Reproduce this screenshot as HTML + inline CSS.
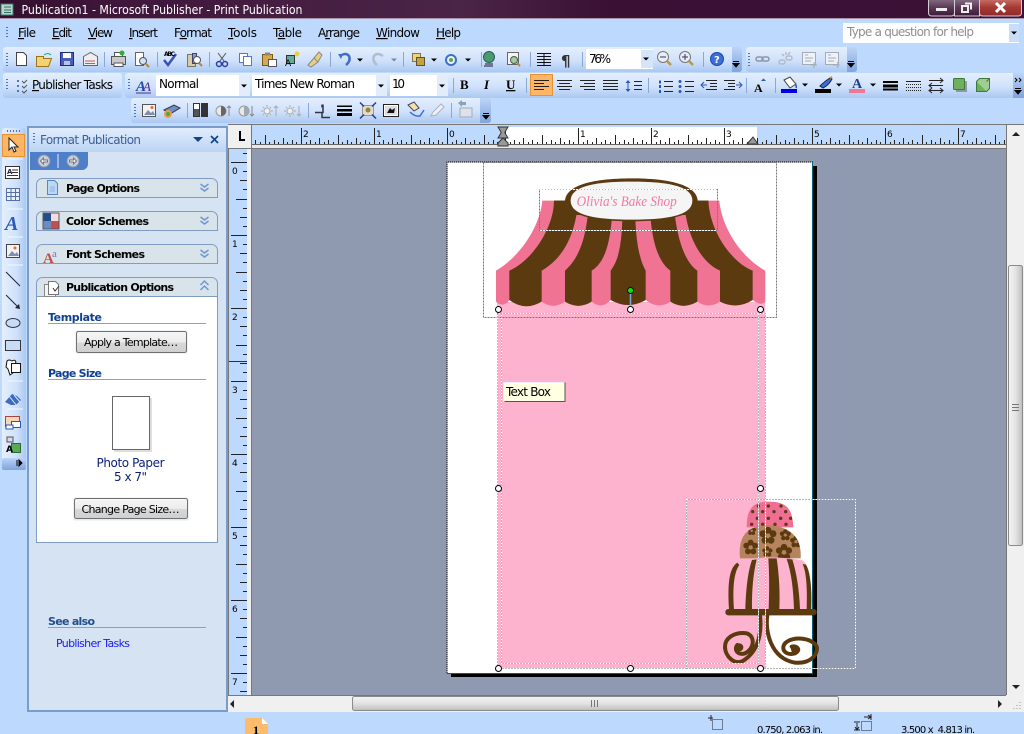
<!DOCTYPE html>
<html><head><meta charset="utf-8"><title>Publisher</title>
<style>html,body{margin:0;padding:0;background:#bdd9fd;overflow:hidden}svg{display:block}text{font-family:"DejaVu Sans","Liberation Sans",sans-serif;font-size:11px;fill:#000}.m{font-size:12px}.b{font-weight:bold}.h{fill:#0f3f92;font-weight:bold}</style></head><body>
<svg xmlns="http://www.w3.org/2000/svg" width="1024" height="734" viewBox="0 0 1024 734">
<defs>
<linearGradient id="title" x1="0" x2="1" y1="0" y2="0"><stop offset="0" stop-color="#33102f"/><stop offset=".12" stop-color="#40173c"/><stop offset=".45" stop-color="#4a2548"/><stop offset=".6" stop-color="#3a1035"/><stop offset="1" stop-color="#3c1137"/></linearGradient>
<linearGradient id="tb" x1="0" x2="0" y1="0" y2="1"><stop offset="0" stop-color="#e4effe"/><stop offset=".55" stop-color="#cfe1fb"/><stop offset="1" stop-color="#abc8f2"/></linearGradient>
<linearGradient id="ch" x1="0" x2="0" y1="0" y2="1"><stop offset="0" stop-color="#bcd4f6"/><stop offset="1" stop-color="#80a4de"/></linearGradient>
<linearGradient id="vt" x1="0" x2="1" y1="0" y2="0"><stop offset="0" stop-color="#e4effe"/><stop offset=".6" stop-color="#cfe1fb"/><stop offset="1" stop-color="#abc8f2"/></linearGradient>
<linearGradient id="btn" x1="0" x2="0" y1="0" y2="1"><stop offset="0" stop-color="#f6f6f6"/><stop offset=".5" stop-color="#ececec"/><stop offset=".55" stop-color="#d8d8d8"/><stop offset="1" stop-color="#cfcfcf"/></linearGradient>
<linearGradient id="sv" x1="0" x2="1" y1="0" y2="0"><stop offset="0" stop-color="#f4f4f4"/><stop offset=".5" stop-color="#e4e4e4"/><stop offset="1" stop-color="#bdbdbd"/></linearGradient>
<linearGradient id="sh" x1="0" x2="0" y1="0" y2="1"><stop offset="0" stop-color="#f4f4f4"/><stop offset=".5" stop-color="#e2e2e2"/><stop offset="1" stop-color="#bdbdbd"/></linearGradient>
<linearGradient id="gl" x1="0" x2="0" y1="0" y2="1"><stop offset="0" stop-color="#8a7488"/><stop offset=".5" stop-color="#5c3c58"/><stop offset="1" stop-color="#3c1b38"/></linearGradient>
<linearGradient id="red" x1="0" x2="0" y1="0" y2="1"><stop offset="0" stop-color="#c97a72"/><stop offset=".5" stop-color="#a83a34"/><stop offset="1" stop-color="#8e2a2a"/></linearGradient>
<linearGradient id="ph" x1="0" x2="0" y1="0" y2="1"><stop offset="0" stop-color="#e1edfd"/><stop offset="1" stop-color="#bcd4f4"/></linearGradient>
<pattern id="rh" patternUnits="userSpaceOnUse" x="447" y="127" width="73" height="18"><path d="M.5 1V18M5.5 15V18M9.5 13V18M14.5 15V18M18.5 11V18M23.5 15V18M27.5 13V18M32.5 15V18M37.5 8V18M41.5 15V18M46.5 13V18M50.5 15V18M55.5 11V18M59.5 15V18M64.5 13V18M68.5 15V18" stroke="#222" fill="none"/></pattern>
<pattern id="rw" patternUnits="userSpaceOnUse" x="505" y="127" width="73" height="18"><path d="M.5 1V18M5.5 15V18M9.5 13V18M14.5 15V18M18.5 11V18M23.5 15V18M27.5 13V18M32.5 15V18M37.5 8V18M41.5 15V18M46.5 13V18M50.5 15V18M55.5 11V18M59.5 15V18M64.5 13V18M68.5 15V18" stroke="#222" fill="none"/></pattern>
<pattern id="rv" patternUnits="userSpaceOnUse" x="229" y="162" width="18" height="73"><path d="M2 .5H18M14 9.5H18M11 18.5H18M14 27.5H18M7 37.5H18M14 46.5H18M11 55.5H18M14 64.5H18" stroke="#222" fill="none"/></pattern>
<clipPath id="t1"><path d="M200 112C200 60 215 35 265 35C320 35 337 55 340 112Z"/></clipPath>
<clipPath id="t2"><path d="M180 205C175 150 190 108 262 106C340 108 365 150 362 205Z"/></clipPath>
<g id="fl"><circle cx="0" cy="-14" r="9"/><circle cx="13" cy="-5" r="9"/><circle cx="8" cy="12" r="9"/><circle cx="-8" cy="12" r="9"/><circle cx="-13" cy="-5" r="9"/><circle cx="0" cy="0" r="6" fill="#b5845e"/></g>
<g id="dd"><path d="M-3 -1.5H3L0 1.5Z" fill="#000"/></g>
<g id="chev"><path d="M-3 -3.5H3M-3 -1.5H3L0 2Z" stroke="#000" stroke-width="1" fill="#000"/></g>
<g id="pc"><path d="M-4 -2L0 1L4 -2M-4 2L0 5L4 2" stroke="#6f96d6" stroke-width="1.5" fill="none"/></g>
</defs>

<rect width="1024" height="734" fill="#bdd9fd"/>
<!-- title bar -->
<rect width="1024" height="19" fill="url(#title)"/><rect y="18" width="1024" height="1" fill="#a893a8"/>
<rect x="1" y="4" width="12" height="11" fill="#b9d8c8" stroke="#3d7a72"/><path d="M4 7H11M4 10H11M4 12.500H11" stroke="#2e6c66"/>
<text x="21.500" y="14" style="font-size:12px;fill:#fff" textLength="281" lengthAdjust="spacingAndGlyphs">Publication1 - Microsoft Publisher - Print Publication</text>
<rect x="928.500" y="-2" width="26" height="18" rx="3" fill="url(#gl)" stroke="#d8ccd8"/><rect x="954.500" y="-2" width="25" height="18" fill="url(#gl)" stroke="#d8ccd8"/><rect x="979.500" y="-2" width="42" height="18" rx="3" fill="url(#red)" stroke="#d8ccd8"/>
<rect x="936" y="8" width="11" height="3" fill="#eee"/><path d="M962 6h6v6h-6zM965 3.500h6v6" fill="none" stroke="#eee" stroke-width="2"/><path d="M996 3L1005 12M1005 3L996 12" stroke="#fff" stroke-width="3"/>

<!-- menu -->
<path d="M7 27v1M7 30v1M7 33v1M7 36v1" stroke="#4a75c0" stroke-width="2"/>
<g class="m">
<text class="m" x="18" y="37" textLength="18"><tspan text-decoration="underline">F</tspan>ile</text>
<text class="m" x="52" y="37" textLength="20"><tspan text-decoration="underline">E</tspan>dit</text>
<text class="m" x="88" y="37" textLength="25"><tspan text-decoration="underline">V</tspan>iew</text>
<text class="m" x="129" y="37" textLength="29"><tspan text-decoration="underline">I</tspan>nsert</text>
<text class="m" x="174" y="37" textLength="38">F<tspan text-decoration="underline">o</tspan>rmat</text>
<text class="m" x="228" y="37" textLength="29"><tspan text-decoration="underline">T</tspan>ools</text>
<text class="m" x="273" y="37" textLength="29">T<tspan text-decoration="underline">a</tspan>ble</text>
<text class="m" x="318" y="37" textLength="42">A<tspan text-decoration="underline">r</tspan>range</text>
<text class="m" x="376" y="37" textLength="44"><tspan text-decoration="underline">W</tspan>indow</text>
<text class="m" x="436" y="37" textLength="25"><tspan text-decoration="underline">H</tspan>elp</text>
</g>
<rect x="843" y="23" width="176" height="20" fill="#fff"/><rect x="1009" y="24" width="10" height="18" fill="#c9ddf8"/><use href="#dd" x="1014" y="33"/>
<text x="847" y="36" style="font-size:12px;fill:#8e8e8e" textLength="127">Type a question for help</text>

<!-- toolbars -->
<rect x="3" y="47" width="739" height="25" rx="3" fill="url(#tb)"/>
<path d="M732 47h7a3 3 0 0 1 3 3v19a3 3 0 0 1-3 3h-7z" fill="url(#ch)"/>
<rect x="746" y="47" width="111" height="25" rx="3" fill="url(#tb)"/>
<path d="M847 47h7a3 3 0 0 1 3 3v19a3 3 0 0 1-3 3h-7z" fill="url(#ch)"/>
<rect x="3" y="73" width="119" height="25" rx="3" fill="url(#tb)"/>
<rect x="125" y="73" width="899" height="25" rx="3" fill="url(#tb)"/>
<path d="M1013 73h11v25h-11z" fill="url(#ch)"/>
<rect x="131" y="98" width="360" height="25" rx="3" fill="url(#tb)"/>
<path d="M480 98h8a3 3 0 0 1 3 3v19a3 3 0 0 1-3 3h-8z" fill="url(#ch)"/>
<path d="M7 53v1M7 56v1M7 59v1M7 62v1M7 65v1M749 53v1M749 56v1M749 59v1M749 62v1M749 65v1M7 79v1M7 82v1M7 85v1M7 88v1M129 79v1M129 82v1M129 85v1M129 88v1M135 104v1M135 107v1M135 110v1M135 113v1M135 116v1" stroke="#4a75c0" stroke-width="2"/>
<use href="#chev" x="736" y="65"/><use href="#chev" x="851" y="65"/><use href="#chev" x="1018" y="92"/><use href="#chev" x="486" y="117"/>
<path d="M1015 78l2 2-2 2M1019 78l2 2-2 2" stroke="#000" fill="none"/>
<!-- separators -->
<path d="M104.500 52v15M157.500 52v15M209.500 52v15M330.500 52v15M403.500 52v15M481.500 52v15M530.500 52v15M582.500 52v15M703.500 52v15M453.500 78v15M526.500 78v15M648.500 78v15M746.500 78v15M775.500 78v15M187.500 103v15M308.500 103v15M451.500 103v15" stroke="#8aa8d4"/>

<!-- toolbar1 icons -->
<g stroke-width="1">
<path d="M16.500 52.500h7l3 3v10h-10z" fill="#fff" stroke="#444"/>
<path d="M36.500 56.500h7v2h8l-3 8h-12z" fill="#f4d274" stroke="#9c7418"/><path d="M44 55q4-3 7 0" stroke="#2a7" fill="none"/>
<rect x="60.500" y="52.500" width="13" height="13" fill="#4c5fb8" stroke="#1c2c80"/><rect x="63" y="53" width="8" height="5" fill="#fff"/><rect x="64" y="61" width="6" height="4" fill="#b7c2ea"/>
<path d="M83.500 56.500l7-4 7 4v9h-14z" fill="#eee" stroke="#666"/><path d="M85 61h10M85 63.500h10" stroke="#c55"/>
<rect x="111.500" y="56.500" width="14" height="8" fill="#c9c9c9" stroke="#555"/><rect x="114.500" y="52.500" width="8" height="4" fill="#fff" stroke="#555"/><rect x="114" y="63" width="9" height="3.500" fill="#fff" stroke="#555"/><circle cx="122" cy="53" r="2.500" fill="#3a3"/>
<path d="M135.500 52.500h8v13h-8z" fill="#fff" stroke="#666"/><circle cx="143" cy="61" r="3.500" fill="#cfe2f7" stroke="#555"/><path d="M146 64l3 3" stroke="#b8892c" stroke-width="2"/>
<path d="M164 60l4 5 8-11" stroke="#3a4fb8" stroke-width="2.500" fill="none"/><text x="164" y="56" style="font-size:6px;font-weight:bold" textLength="11">ABC</text>
<rect x="187.500" y="54.500" width="8" height="12" fill="#d8c9a8" stroke="#776"/><rect x="192.500" y="53.500" width="4" height="10" fill="#7f9cd8" stroke="#446"/><circle cx="197" cy="60" r="3.500" fill="#fff" stroke="#555"/><path d="M199 63l3 3" stroke="#b8892c" stroke-width="2"/>
<path d="M218 53l6 8M226 53l-6 8" stroke="#555" fill="none"/><circle cx="219" cy="64" r="2.500" fill="none" stroke="#2a3fa8" stroke-width="1.500"/><circle cx="225" cy="64" r="2.500" fill="none" stroke="#2a3fa8" stroke-width="1.500"/>
<rect x="239.500" y="53.500" width="8" height="9" fill="#fff" stroke="#5c78b8"/><rect x="243.500" y="56.500" width="8" height="9" fill="#fff" stroke="#5c78b8"/>
<rect x="262.500" y="54.500" width="10" height="11" fill="#d8a850" stroke="#7a5a18"/><rect x="265" y="52.500" width="5" height="3" fill="#888"/><rect x="268.500" y="59.500" width="8" height="7" fill="#fff" stroke="#555"/>
<rect x="286.500" y="55.500" width="8" height="8" fill="#6a9" stroke="#333"/><text x="285" y="66" style="font-size:9px">A</text><circle cx="297" cy="54" r="2.500" fill="#f0d030"/>
<path d="M308 65l6-7 4 4-7 5zM314 58l5-6 3 3-4 7" fill="#e8cf80" stroke="#888"/>
<path d="M340 56q6-4 9 0q2 5-3 9" stroke="#3f6fc8" stroke-width="2.500" fill="none"/><path d="M338 54l5 0-2 5z" fill="#3f6fc8"/><use href="#dd" x="360" y="60"/>
<path d="M383 56q-6-4-9 0q-2 5 3 9" stroke="#b0bdcd" stroke-width="2.500" fill="none"/><use href="#dd" x="394" y="60" opacity=".4"/>
<rect x="412.500" y="53.500" width="8" height="8" fill="#f4d274" stroke="#775"/><rect x="416.500" y="57.500" width="8" height="8" fill="#c8a040" stroke="#553"/><use href="#dd" x="434" y="60"/>
<circle cx="451" cy="60" r="5" fill="#e8f2ff" stroke="#3f6fc8" stroke-width="2"/><circle cx="451" cy="60" r="2" fill="#5a5"/><use href="#dd" x="468" y="60"/>
<circle cx="489" cy="57" r="5.500" fill="#4a9a6a" stroke="#2a5a6a"/><path d="M485 64h8M484 66h9" stroke="#557" stroke-width="1.500"/>
<rect x="507.500" y="52.500" width="11" height="12" fill="#f4f4f4" stroke="#666"/><circle cx="514" cy="60" r="3.500" fill="#9ccf9c" stroke="#555"/><path d="M517 63l3 3" stroke="#b8892c" stroke-width="2"/>
<path d="M537 53.500h14M537 56.500h14M537 59.500h14M537 62.500h14M537 65.500h14M544 53v13" stroke="#111"/>
<text x="561" y="66" style="font-size:15px;font-weight:bold;fill:#333">¶</text>
<rect x="586" y="49" width="67" height="20" fill="#fff"/><rect x="641" y="50" width="12" height="18" fill="#d4e4fa"/><use href="#dd" x="646" y="59"/>
<text x="589" y="63" style="font-size:12px" textLength="22">76%</text>
<circle cx="663" cy="57" r="5.500" fill="#e8eef6" stroke="#777"/><path d="M660 57h6" stroke="#336"/><path d="M667 61l4 4" stroke="#c8962c" stroke-width="2.500"/>
<circle cx="685" cy="57" r="5.500" fill="#e8eef6" stroke="#777"/><path d="M682 57h6M685 54v6" stroke="#336"/><path d="M689 61l4 4" stroke="#c8962c" stroke-width="2.500"/>
<circle cx="717" cy="59" r="6.500" fill="#3a6fd8" stroke="#1d49a8"/><text x="714" y="63" style="font-size:10px;font-weight:bold;fill:#fff">?</text>
<g fill="none" stroke="#8d96a6" stroke-width="1.500"><rect x="756" y="57" width="7" height="4" rx="2"/><rect x="762" y="57" width="7" height="4" rx="2"/></g>
<g fill="none" stroke="#b4bcc8" stroke-width="1.500"><rect x="779" y="60" width="6" height="4" rx="2"/><rect x="786" y="56" width="6" height="4" rx="2"/><path d="M786 52v3M790 52l-2 3M782 54l2 2"/></g>
<rect x="802.500" y="52.500" width="13" height="12" fill="#eef2f8" stroke="#a4acb8"/><path d="M805 55h3M805 58h8M805 61h6" stroke="#a4acb8"/><path d="M811 65h6M814 62v6" stroke="#a4acb8"/>
<rect x="825.500" y="52.500" width="13" height="12" fill="#eef2f8" stroke="#a4acb8"/><path d="M828 55h3M828 58h8M828 61h6" stroke="#a4acb8"/><path d="M833 65h6M837 62l2 3-2 3" stroke="#a4acb8" fill="none"/>
</g>
<!-- toolbar2 -->
<path d="M17 80h2v2h-2zM17 85h2v2h-2zM17 90h2v2h-2z" fill="#4a75c0"/><path d="M22 81l2 2 3-3M22 86l2 2 3-3M22 91l2 2 3-3" stroke="#555" fill="none"/>
<text x="32" y="89" style="font-size:12px" textLength="81"><tspan text-decoration="underline">P</tspan>ublisher Tasks</text>
<text x="136" y="91" style="font-family:'Liberation Serif',serif;font-size:15px;font-style:italic;font-weight:bold;fill:#1f4fb0">A</text><text x="143" y="91" style="font-family:'Liberation Serif',serif;font-size:13px;font-style:italic;fill:#4a2f90">A</text><path d="M136 93h15" stroke="#4a2f90"/>
<rect x="156" y="75" width="94" height="21" fill="#fff"/><rect x="239" y="75" width="11" height="21" fill="#e2ecfb"/><use href="#dd" x="244" y="86"/>
<text x="159" y="88" style="font-size:12px" textLength="40">Normal</text>
<rect x="252" y="75" width="135" height="21" fill="#fff"/><rect x="376" y="75" width="11" height="21" fill="#e2ecfb"/><use href="#dd" x="381" y="86"/>
<text x="255" y="88" style="font-size:12px" textLength="100">Times New Roman</text>
<rect x="390" y="75" width="58" height="21" fill="#fff"/><rect x="437" y="75" width="11" height="21" fill="#e2ecfb"/><use href="#dd" x="442" y="86"/>
<text x="392" y="88" style="font-size:12px" textLength="13">10</text>
<text x="460" y="89" style="font-family:'Liberation Serif',serif;font-size:13px;font-weight:bold">B</text>
<text x="484" y="89" style="font-family:'Liberation Serif',serif;font-size:13px;font-style:italic;font-weight:bold">I</text>
<text x="506" y="89" style="font-family:'Liberation Serif',serif;font-size:13px;font-weight:bold" text-decoration="underline">U</text>
<rect x="530.500" y="74.500" width="22" height="21" fill="#feb565" stroke="#e69432"/>
<path d="M534 80.500h15M534 83.500h10M534 86.500h15M534 89.500h10M557 80.500h15M559 83.500h11M557 86.500h15M559 89.500h11M580 80.500h15M584 83.500h11M580 86.500h15M584 89.500h11M603 80.500h15M603 83.500h15M603 86.500h15M603 89.500h15" stroke="#222"/>
<path d="M628 80l-2.500 3h5zM628 92l-2.500-3h5z" fill="#2a56b8"/><path d="M628 82v8" stroke="#2a56b8"/><path d="M634 81.500h8M634 85.500h8M634 89.500h8" stroke="#222"/>
<path d="M660 80.500v3M660 85v3M660 90v3" stroke="#2a56b8" stroke-width="2"/><path d="M664 81.500h9M664 86.500h9M664 91.500h9" stroke="#222"/>
<circle cx="680" cy="81.500" r="1.500" fill="#2a56b8"/><circle cx="680" cy="86.500" r="1.500" fill="#2a56b8"/><circle cx="680" cy="91.500" r="1.500" fill="#2a56b8"/><path d="M685 81.500h9M685 86.500h9M685 91.500h9" stroke="#222"/>
<path d="M706 80.500h11M710 83.500h7M710 86.500h7M706 89.500h11" stroke="#222"/><path d="M701 85h6M704 82l-3 3 3 3" stroke="#2a56b8" fill="none"/>
<path d="M724 80.500h11M728 83.500h7M728 86.500h7M724 89.500h11" stroke="#222"/><path d="M736 85h5M739 82l3 3-3 3" stroke="#2a56b8" fill="none"/>
<text x="754" y="92" style="font-family:'Liberation Serif',serif;font-size:12px;font-weight:bold">A</text><path d="M761 81h5l-2.500-2.500z" fill="#2a56b8"/>
<path d="M784 80l6-3 6 7-6 4z" fill="#fff" stroke="#444"/><path d="M795 84q2 2 1 4" stroke="#2a56b8" stroke-width="1.500" fill="none"/><rect x="781" y="89" width="16" height="4" fill="#0000e8"/><use href="#dd" x="805" y="85"/>
<path d="M820 86q5-5 10-8l2 1q-3 6-9 9z" fill="#3a6fd8" stroke="#224"/><path d="M830 78l2-1" stroke="#c8962c" stroke-width="2"/><rect x="815" y="89" width="16" height="4" fill="#000"/><use href="#dd" x="839" y="85"/>
<text x="852" y="88" style="font-family:'Liberation Serif',serif;font-size:14px;font-weight:bold;fill:#1f3f90">A</text><rect x="849" y="89" width="16" height="4" fill="#f07894"/><use href="#dd" x="873" y="85"/>
<path d="M883 81h15v2h-15zM883 84.500h15v3h-15zM883 88.500h15v2h-15z" fill="#000"/>
<path d="M906 81.500h15" stroke="#222"/><path d="M906 84.500h15M906 87.500h15M906 90.500h15" stroke="#222" stroke-dasharray="1 1"/>
<path d="M929 80.500h14M940 78l3 2.500-3 2.500M929 85.500h14M932 83l-3 2.500 3 2.500M929 90.500h14M940 88l3 2.500-3 2.500M932 88l-3 2.500 3 2.500" stroke="#222" fill="none"/>
<rect x="956" y="81" width="11" height="11" fill="#555" opacity=".5"/><rect x="953.500" y="78.500" width="11" height="11" rx="1" fill="#6fb060" stroke="#3c7a38"/>
<path d="M976.500 81.500h10v10h-10z" fill="#6fb060" stroke="#3c7a38"/><path d="M976.500 81.500l3-3h10v10l-3 3M986.500 81.500l3-3" fill="#a0cd90" stroke="#3c7a38"/>

<!-- toolbar3 -->
<rect x="142.500" y="104.500" width="13" height="12" fill="#f2f2f2" stroke="#555"/><path d="M144 115l4-5 3 3 2-2 2 4z" fill="#7e8eb0"/><circle cx="152" cy="107.500" r="1.500" fill="#e46c28"/>
<path d="M164 110l10-5 6 3-10 6z" fill="#6f8fc0" stroke="#335"/><circle cx="168" cy="114" r="4" fill="#e94"/><circle cx="168" cy="114" r="2" fill="#4a4"/>
<rect x="193.500" y="103.500" width="6" height="13" fill="#fff" stroke="#333"/><rect x="194" y="109" width="5" height="7" fill="#555"/><rect x="201.500" y="103.500" width="6" height="13" fill="#333" stroke="#333"/>
<circle cx="221" cy="111" r="5" fill="#e8e8e8" stroke="#999"/><path d="M221 106a5 5 0 0 1 0 10z" fill="#666"/><path d="M229 116v-10M227 108l2-2 2 2" stroke="#888" fill="none"/>
<circle cx="244" cy="111" r="5" fill="#e8e8e8" stroke="#999"/><path d="M244 106a5 5 0 0 1 0 10z" fill="#a0a8b0"/><path d="M252 106v10M250 114l2 2 2-2" stroke="#888" fill="none"/>
<circle cx="267" cy="111" r="3" fill="#f0f0f0" stroke="#aaa"/><path d="M267 105v2M267 115v2M261 111h2M271 111h2M263 107l1 1M271 115l-1-1M263 115l1-1M271 107l-1 1M276 116v-10M274 108l2-2 2 2" stroke="#aaa" fill="none"/>
<circle cx="290" cy="111" r="3" fill="#f0f0f0" stroke="#aaa"/><path d="M290 105v2M290 115v2M284 111h2M294 111h2M286 107l1 1M294 115l-1-1M286 115l1-1M294 107l-1 1M299 106v10M297 114l2 2 2-2" stroke="#aaa" fill="none"/>
<path d="M315 112.500h8v-8M322 112.500v5h8M322 104.500v3M315 112.500h-0" stroke="#334" fill="none" stroke-width="1.500"/>
<path d="M337 105.500h15v1.500h-15zM337 109h15v2.500h-15zM337 113h15v3h-15z" fill="#000"/>
<rect x="362.500" y="105.500" width="11" height="10" fill="#e8d8c8" stroke="#999"/><path d="M360 102.500l4 4M376 102.500l-4 4M360 118.500l4-4M376 118.500l-4-4" stroke="#1f3f90" stroke-width="1.500"/><circle cx="368" cy="110" r="2.500" fill="#884"/>
<rect x="383.500" y="104.500" width="15" height="12" fill="#fff" stroke="#222"/><rect x="385" y="106" width="12" height="9" fill="#ddd"/><path d="M387 113l3-5 2 2 3-2 -1 5z" fill="#111"/>
<path d="M408 105l6-3 5 6-5 3z" fill="#f4e0a8" stroke="#446"/><path d="M410 112q5 5 10 4l4-6" stroke="#3a6fd8" stroke-width="1.500" fill="none"/>
<path d="M431 116l2-4 8-8 3 3-8 8z" fill="#eef2f8" stroke="#aab2c0"/>
<path d="M460 108h12v9h-12z" fill="#dde2ea" stroke="#a4acb8"/><path d="M458 103l4-3v2h4v3h-4v2z" fill="#8fa0b8"/>

<!-- left tool bar -->
<rect x="2" y="128" width="24" height="342" rx="3" fill="url(#vt)"/>
<path d="M7 159h16M7 209h16M7 237h16M7 265h16M7 381h16M7 409h16" stroke="#f2f7ff"/>
<path d="M7 131h1M10 131h1M13 131h1M16 131h1M19 131h1" stroke="#4a75c0" stroke-width="2"/>
<rect x="2.500" y="134.500" width="22" height="22" fill="#feb565" stroke="#e69432"/>
<path d="M9 138v12l3-3 2 5 2-1-2-4h4z" fill="#fff" stroke="#222"/>
<rect x="5.500" y="166.500" width="14" height="12" fill="#fff" stroke="#333"/><text x="7" y="174" style="font-size:7px;font-weight:bold;fill:#224">A</text><path d="M12 170h6M12 172.500h6M7 175.500h11" stroke="#333"/>
<rect x="6.500" y="188.500" width="13" height="12" fill="#e8f0fc" stroke="#5570a8"/><path d="M6.500 192.500h13M6.500 196.500h13M11 188.500v12M15.500 188.500v12" stroke="#5570a8"/>
<text x="5" y="230" style="font-family:'Liberation Serif',serif;font-size:20px;font-weight:bold;font-style:italic;fill:#2a5ab8">A</text>
<rect x="6.500" y="244.500" width="13" height="13" fill="#f2f2f2" stroke="#444"/><path d="M8 256l4-5 3 3 2-2 2 4z" fill="#7e8eb0"/><circle cx="15" cy="248" r="1.500" fill="#e46c28"/>
<path d="M6 272l14 14M6 295l13 13" stroke="#223" fill="none"/><path d="M20 309l-1-5-4 4z" fill="#223"/>
<ellipse cx="13" cy="323" rx="7" ry="4.500" fill="#c8dcf6" stroke="#334"/>
<rect x="5.500" y="340.500" width="15" height="10" fill="#c8dcf6" stroke="#334"/>
<path d="M7 361q2-2 5 0q3-2 4 1l-2 4 3 4-7 5-2-6-2-2z" fill="#fff" stroke="#111"/><rect x="11.500" y="363.500" width="9" height="9" fill="#fff" stroke="#111"/>
<path d="M5 402l7-8 5 2 4 4-5 5h-5z" fill="#3d6cc0"/><path d="M9 396l8 10M14 395l6 7" stroke="#dfe8f8"/>
<rect x="5.500" y="416.500" width="14" height="10" fill="#f3d8b8" stroke="#a44"/><rect x="11.500" y="421.500" width="9" height="6" fill="#fff" stroke="#2a56b8"/><rect x="6" y="425" width="7" height="4" fill="#fff" stroke="#2a56b8"/>
<rect x="11.500" y="443.500" width="9" height="9" fill="#5aa85a" stroke="#2a6a2a"/><text x="6" y="452" style="font-size:9px;font-weight:bold">A</text><rect x="7" y="437" width="6" height="5" fill="#d8d8f0" stroke="#555"/>
<rect x="2" y="458" width="24" height="12" rx="2" fill="url(#ch)"/><path d="M17 460v6M19 460l3 3-3 3z" stroke="#000" fill="#000"/>

<!-- task pane -->
<rect x="28" y="127" width="199" height="584" fill="#d5e3f3" stroke="#7a9cc8" stroke-width="2"/>
<rect x="29" y="128" width="197" height="24" fill="url(#ph)"/>
<path d="M34 133v1M34 136v1M34 139v1M34 142v1" stroke="#4a75c0" stroke-width="2"/>
<text x="40" y="144" style="font-size:12px;fill:#3c5f96" textLength="101">Format Publication</text>
<path d="M193 137h10l-5 5z" fill="#11448f"/><path d="M211 136l7 7M218 136l-7 7" stroke="#11448f" stroke-width="1.700"/>
<path d="M30 152h58v12a6 6 0 0 1-6 6H30z" fill="#4f7fc8"/>
<circle cx="44" cy="161" r="6" fill="#c6ced9" stroke="#8a96a8"/><path d="M40.500 161l3-3v2h4v2h-4v2z" fill="#f4f4f4" stroke="#778"/>
<path d="M58 154v14" stroke="#e6eefa"/>
<circle cx="73" cy="161" r="6" fill="#c6ced9" stroke="#8a96a8"/><path d="M76.500 161l-3-3v2h-4v2h4v2z" fill="#f4f4f4" stroke="#778"/>
<g fill="#d8e4ea" stroke="#7f9dc4">
<path d="M36.500 197.500v-13a6 6 0 0 1 6-6h169a6 6 0 0 1 6 6v13z"/>
<path d="M36.500 230.500v-13a6 6 0 0 1 6-6h169a6 6 0 0 1 6 6v13z"/>
<path d="M36.500 263.500v-13a6 6 0 0 1 6-6h169a6 6 0 0 1 6 6v13z"/>
<path d="M36.500 296.500v-13a6 6 0 0 1 6-6h169a6 6 0 0 1 6 6v13z"/>
</g>
<rect x="36.500" y="296.500" width="181" height="246" fill="#fff" stroke="#7f9dc4"/>
<text x="66" y="192" class="b" textLength="74">Page Options</text>
<text x="66" y="225" class="b" textLength="83">Color Schemes</text>
<text x="66" y="258" class="b" textLength="79">Font Schemes</text>
<text x="66" y="291" class="b" textLength="108">Publication Options</text>
<use href="#pc" x="204.500" y="186"/><use href="#pc" x="204.500" y="219"/><use href="#pc" x="204.500" y="252"/>
<path d="M200 285l4-4 4 4M200 290l4-4 4 4" stroke="#6f96d6" stroke-width="1.500" fill="none" transform="translate(.5 0)"/>
<path d="M47.500 180.500h7l3 3v11h-10z" fill="#bcd8f4" stroke="#5b86c0"/><path d="M50 187h5M50 189h5M50 191h5" stroke="#8fb4dc"/>
<rect x="43" y="213" width="16" height="16" fill="#6a8ebd" stroke="#556"/><rect x="43.500" y="213.500" width="7.500" height="7.500" fill="#234c88"/><rect x="51" y="213.500" width="7.500" height="7.500" fill="#f4dcdc"/><rect x="51" y="221" width="7.500" height="7.500" fill="#c44e50"/>
<text x="43" y="263" style="font-family:'Liberation Serif',serif;font-size:15px;font-weight:bold;fill:#c0504d">A</text><text x="52" y="257" style="font-family:'Liberation Serif',serif;font-size:11px;fill:#8070c0">a</text>
<path d="M44.500 284.500h8l3 3v9h-11z" fill="#f4f4f4" stroke="#888"/><path d="M48.500 281.500h7l3 3v10h-10z" fill="#fff" stroke="#777"/><path d="M53 288l2 3 4-5" stroke="#333" fill="none"/>
<text x="48" y="321" class="h" textLength="54">Template</text><path d="M48 323.500h158" stroke="#7fa2d8"/>
<rect x="75.500" y="330.500" width="112" height="23" fill="#e0ebf6"/><rect x="76.500" y="331.500" width="110" height="21" rx="2" fill="url(#btn)" stroke="#707070"/>
<text x="84" y="346" textLength="94">Apply a Template…</text>
<text x="48" y="377" class="h" textLength="54">Page Size</text><path d="M48 379.500h158" stroke="#7fa2d8"/>
<rect x="114" y="398" width="38" height="54" fill="#bbb" opacity=".5"/><rect x="112.500" y="396.500" width="37" height="53" fill="#fff" stroke="#666"/>
<text x="130.500" y="467" text-anchor="middle" style="font-size:12px;fill:#0b1f78" textLength="68">Photo Paper</text>
<text x="130.500" y="481" text-anchor="middle" style="font-size:12px;fill:#0b1f78" textLength="33">5 x 7"</text>
<rect x="73.500" y="497.500" width="115" height="23" fill="#e0ebf6"/><rect x="74.500" y="498.500" width="113" height="20" rx="2" fill="url(#btn)" stroke="#707070"/>
<text x="81.500" y="513" textLength="98">Change Page Size…</text>
<text x="48" y="625" class="h" textLength="47" style="fill:#214f8f">See also</text><path d="M48 627.500h158" stroke="#7fa2d8"/>
<text x="56" y="647" style="fill:#1a1aee" textLength="74">Publisher Tasks</text>

<!-- canvas -->
<rect x="228" y="125" width="778" height="570" fill="#8f99af"/>
<rect x="228" y="124" width="796" height="1" fill="#777"/>
<!-- rulers -->
<rect x="252" y="125" width="754" height="20" fill="#bdd9fd"/><rect x="505" y="127" width="252" height="18" fill="#fff"/>
<rect x="252" y="127" width="253" height="18" fill="url(#rh)"/><rect x="505" y="127" width="252" height="18" fill="url(#rw)"/><rect x="757" y="127" width="249" height="18" fill="url(#rh)"/>
<rect x="252" y="144" width="754" height="1" fill="#666"/><rect x="252" y="145" width="754" height="3" fill="#e8e8e8"/><rect x="228" y="148" width="778" height="1" fill="#777"/>
<rect x="228" y="125" width="23" height="23" fill="#f0f0f0"/><path d="M251.500 125v24" stroke="#777"/>
<path d="M240 131v9h5" stroke="#000" stroke-width="2" fill="none"/>
<g>
<text x="303" y="137" style="font-size:9px">2</text><text x="376" y="137" style="font-size:9px">1</text><text x="449" y="137" style="font-size:9px">0</text>
<text x="580" y="137" style="font-size:9px">1</text><text x="653" y="137" style="font-size:9px">2</text><text x="726" y="137" style="font-size:9px">3</text>
<text x="814" y="137" style="font-size:9px">5</text><text x="887" y="137" style="font-size:9px">6</text><text x="960" y="137" style="font-size:9px">7</text>
</g>
<rect x="228" y="149" width="19" height="546" fill="#bdd9fd"/><rect x="247" y="149" width="4" height="546" fill="#efefef"/><rect x="251" y="149" width="1" height="546" fill="#777"/><rect x="228" y="149" width="1" height="546" fill="#777"/>
<rect x="229" y="149" width="18" height="546" fill="url(#rv)"/>
<g>
<text x="232" y="174" style="font-size:9px">0</text><text x="232" y="247" style="font-size:9px">1</text><text x="232" y="320" style="font-size:9px">2</text><text x="232" y="393" style="font-size:9px">3</text><text x="232" y="466" style="font-size:9px">4</text><text x="232" y="539" style="font-size:9px">5</text><text x="232" y="612" style="font-size:9px">6</text><text x="232" y="685" style="font-size:9px">7</text>
</g>
<path d="M229 361.500h18" stroke="#4a2a08"/>
<!-- margin markers -->
<path d="M498 127h10l-3 5v1l3 5h-10l3-5v-1z" fill="#999" stroke="#333"/><path d="M498 146v-3l5-5 5 5v3z" fill="#999" stroke="#333"/>
<path d="M747 144l6-7 5 7z" fill="#999" stroke="#333"/>

<!-- page -->
<rect x="451" y="166" width="366" height="511" fill="#000"/>
<rect x="447" y="162" width="365.500" height="511.500" fill="#fff"/>
<rect x="447" y="162" width="365.500" height="511.500" fill="none" stroke="#000"/>
<rect x="447" y="162" width="365.500" height="511.500" fill="none" stroke="#00c8e8" stroke-dasharray="1 1"/>
<rect x="497" y="302" width="268" height="366" fill="#fdb3ce"/>

<!-- awning -->
<g transform="translate(480 160) scale(.33333)">
<path d="M48 332C120 290 180 200 187 122L718 122C725 200 780 290 856 332L856 425Q845 440 818 420Q770 450 720 425Q685 448 652 425Q610 450 571 425Q535 450 497 420Q445 450 392 420Q365 450 335 425Q295 450 255 425Q220 450 185 425Q135 455 88 420Q70 445 48 425Z" fill="#f07394"/>
<g fill="#5b3a10">
<path d="M222 122C222 200 160 300 88 332L88 420Q135 455 185 425L185 332C240 300 285 240 295 122Z"/>
<path d="M327 122C320 250 290 300 255 332L255 425Q295 450 335 425L335 332C370 310 395 260 398 122Z"/>
<path d="M428 122C428 260 415 300 392 332L392 420Q445 450 497 420L497 332C480 300 465 250 465 122Z"/>
<path d="M510 122C510 250 540 310 571 332L571 425Q610 450 652 425L652 332C620 310 590 250 580 122Z"/>
<path d="M612 122C620 240 670 310 720 332L720 425Q770 450 818 420L818 332C760 310 690 220 685 122Z"/>
<path d="M222 122H685V165H222Z"/>
<path d="M255 122C258 75 340 55 455 55C570 55 650 75 653 122C650 165 570 184 455 184C340 184 258 165 255 122Z"/>
</g>
<path d="M272 122C272 80 340 65 455 65C570 65 637 80 637 122C637 165 570 179 455 179C340 179 272 165 272 122Z" fill="#f5f5f5"/>
<text x="290" y="138" style="font-family:'Liberation Serif',serif;font-style:italic;font-size:44px;fill:#f27a9f" textLength="300" lengthAdjust="spacingAndGlyphs">Olivia's Bake Shop</text>
</g>

<!-- cake -->
<g transform="translate(680 490) scale(.33333)">
<path d="M200 112C200 60 215 35 265 35C320 35 337 55 340 112Z" fill="#ef6f94"/>
<g clip-path="url(#t1)" fill="#5b3a10"><circle cx="235" cy="48" r="5"/><circle cx="265" cy="48" r="5"/><circle cx="303" cy="48" r="5"/><circle cx="218" cy="65" r="5"/><circle cx="248" cy="65" r="5"/><circle cx="282" cy="65" r="5"/><circle cx="317" cy="65" r="5"/><circle cx="232" cy="85" r="5"/><circle cx="265" cy="85" r="5"/><circle cx="302" cy="85" r="5"/><circle cx="332" cy="85" r="5"/><circle cx="215" cy="103" r="5"/><circle cx="248" cy="103" r="5"/><circle cx="285" cy="103" r="5"/><circle cx="318" cy="103" r="5"/></g>
<path d="M180 205C175 150 190 108 262 106C340 108 365 150 362 205Z" fill="#b5845e"/>
<g clip-path="url(#t2)" fill="#5b3a10">
<use href="#fl" transform="translate(264 137) scale(1.15)"/><use href="#fl" transform="translate(212 172) scale(1)"/><use href="#fl" transform="translate(316 135) scale(.75)"/><use href="#fl" transform="translate(262 185) scale(.7)"/><use href="#fl" transform="translate(312 187) scale(1.1)"/><use href="#fl" transform="translate(348 155) scale(.8)"/><use href="#fl" transform="translate(215 122) scale(.6)"/>
</g>
<path d="M155 358C145 280 150 225 180 210Q270 195 365 210C395 225 395 300 392 358Z" fill="#fdb3ce"/>
<g fill="#5b3a10">
<path d="M147 358C143 290 145 235 172 218L178 225C160 250 158 300 162 358Z"/>
<path d="M196 358C198 290 205 240 216 210L230 208C220 250 215 300 216 358Z"/>
<path d="M266 358C268 300 268 250 265 205L290 205C298 260 300 310 298 358Z"/>
<path d="M342 358C340 300 335 250 320 207L337 208C350 250 358 300 360 358Z"/>
<path d="M380 358C382 300 380 250 368 222L378 224C392 250 396 300 394 358Z"/>
<rect x="136" y="357" width="274" height="19" rx="9"/>
</g>
<g fill="none" stroke="#5b3a10" stroke-width="12" stroke-linecap="round">
<path d="M240 376C245 420 240 480 190 512C165 527 135 500 135 470C135 440 170 425 200 430C225 438 225 475 195 490C175 497 160 480 172 465"/>
<path d="M262 376C255 420 270 505 345 518C395 522 415 490 410 470C400 445 340 435 315 460C300 480 320 498 345 490C365 480 350 465 335 470"/>
</g>
<circle cx="178" cy="472" r="12" fill="#5b3a10"/><circle cx="345" cy="478" r="12" fill="#5b3a10"/>
</g>

<!-- dashed boxes -->
<g fill="none">
<rect x="483.500" y="162.500" width="293" height="155" stroke="#777" stroke-dasharray="2 1"/>
<rect x="539.500" y="189.500" width="178" height="41" stroke="#777" stroke-dasharray="2 1"/>
<path d="M540 230.500H717M540 189.500H717" stroke="#fff" stroke-dasharray="2 1"/>
<path d="M497.500 313.500H765.500V668.500H497.500Z" stroke="#fff"/><path d="M497.500 313.500H765.500V668.500H497.500Z" stroke="#777" stroke-dasharray="1 2"/>
<path d="M501.500 313.500V663.500H758.500V313.500" stroke="#fff"/><path d="M501.500 313.500V663.500H758.500V313.500" stroke="#777" stroke-dasharray="1 2"/>
<rect x="686.500" y="499.500" width="169" height="169" stroke="#fff" stroke-dasharray="2 1"/>
<rect x="686.500" y="499.500" width="169" height="169" stroke="#666" stroke-dasharray="1 2" stroke-dashoffset="1"/>
</g>
<!-- handles -->
<path d="M630.500 290v19" stroke="#7fa8e0" stroke-width="1.500"/>
<circle cx="630.500" cy="290.500" r="3" fill="#10e010" stroke="#111"/>
<g fill="#fff" stroke="#000"><circle cx="498.500" cy="309.500" r="3"/><circle cx="630.500" cy="309.500" r="3"/><circle cx="760.500" cy="309.500" r="3"/><circle cx="498.500" cy="488.500" r="3"/><circle cx="760.500" cy="488.500" r="3"/><circle cx="498.500" cy="668.500" r="3"/><circle cx="630.500" cy="668.500" r="3"/><circle cx="760.500" cy="668.500" r="3"/></g>
<!-- tooltip -->
<rect x="503.500" y="382.500" width="61" height="19" fill="#ffffe1"/><path d="M504 382.500h60M503.500 383v18" stroke="#eef"/>
<path d="M504.500 401.500h60.500v-19" stroke="#555" fill="none"/>
<text x="506" y="396" style="font-size:12px" textLength="45">Text Box</text>

<!-- scroll bars -->
<rect x="1007" y="125" width="17" height="587" fill="#f0f0f0"/><rect x="1006" y="125" width="1" height="570" fill="#777"/>
<path d="M1012 136h8l-4-4z" fill="#222"/>
<rect x="1008.500" y="265.500" width="14" height="280" rx="2" fill="url(#sv)" stroke="#8a8a8a"/>
<path d="M1012 404.500h7M1012 407.500h7M1012 410.500h7" stroke="#777"/>
<path d="M1012 685h8l-4 4z" fill="#222"/>
<rect x="228" y="695" width="796" height="17" fill="#f0f0f0"/><rect x="228" y="695" width="778" height="1" fill="#777"/>
<rect x="352.500" y="696.500" width="486" height="14" rx="2" fill="url(#sh)" stroke="#8a8a8a"/>
<path d="M591.500 700v7M594.500 700v7M597.500 700v7" stroke="#777"/>
<path d="M234 700v8l-4-4z" fill="#222"/><path d="M998 700v8l4-4z" fill="#222"/>
<path d="M1020 708v1M1017 708v1M1014 708v1M1020 705v1M1017 705v1M1020 702v1" stroke="#999"/>

<!-- status -->
<rect x="228" y="712" width="796" height="22" fill="#bdd9fd"/>
<path d="M245 718h17l6 6v10h-23z" fill="#fdbb6c"/><path d="M262 718l6 6h-6z" fill="#fff"/>
<text x="253" y="734" style="font-family:'Liberation Serif',serif;font-size:12px;font-weight:bold">1</text>
<path d="M708 718h5M711 715v6" stroke="#222"/><rect x="712.500" y="719.500" width="10" height="10" fill="none" stroke="#222" stroke-dasharray="1 1"/>
<text x="757" y="733" textLength="66" style="font-size:10px">0.750, 2.063 in.</text>
<path d="M864 717h7M868 715l3 2-3 2M871 714v6M857 723v7M855 727l2 3 2-3M854 722h6M854 730h6" stroke="#222" fill="none"/><rect x="861.500" y="721.500" width="10" height="9" fill="none" stroke="#222" stroke-dasharray="1 1"/>
<text x="901" y="733" textLength="74" style="font-size:10px" xml:space="preserve">3.500 x  4.813 in.</text>
</svg>
</body></html>
